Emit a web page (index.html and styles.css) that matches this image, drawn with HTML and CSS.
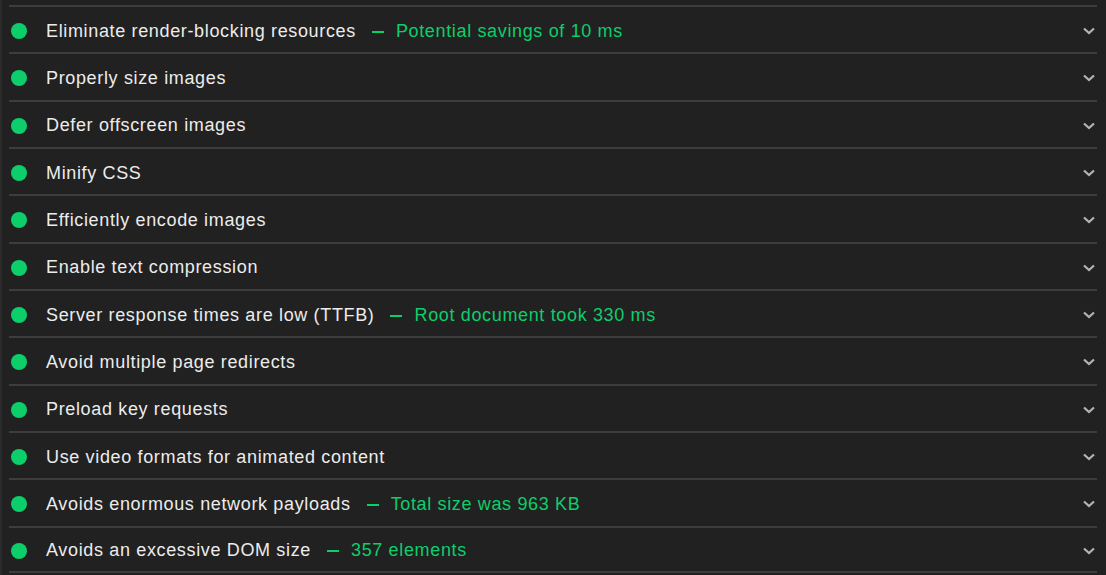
FILE: index.html
```html
<!DOCTYPE html>
<html lang="en">
<head>
<meta charset="utf-8">
<title>Passed audits</title>
<link rel="stylesheet" href="styles.css">
</head>
<body>
<div class="panel">
  <div class="audit"><span class="dot"></span><span class="title">Eliminate render-blocking resources</span><span class="sep"></span><span class="value">Potential savings of 10 ms</span><svg class="chev" viewBox="0 0 12 8"><path d="M1 1.5 L6 6 L11 1.5"/></svg></div>
  <div class="audit"><span class="dot"></span><span class="title">Properly size images</span><svg class="chev" viewBox="0 0 12 8"><path d="M1 1.5 L6 6 L11 1.5"/></svg></div>
  <div class="audit"><span class="dot"></span><span class="title">Defer offscreen images</span><svg class="chev" viewBox="0 0 12 8"><path d="M1 1.5 L6 6 L11 1.5"/></svg></div>
  <div class="audit"><span class="dot"></span><span class="title">Minify CSS</span><svg class="chev" viewBox="0 0 12 8"><path d="M1 1.5 L6 6 L11 1.5"/></svg></div>
  <div class="audit"><span class="dot"></span><span class="title">Efficiently encode images</span><svg class="chev" viewBox="0 0 12 8"><path d="M1 1.5 L6 6 L11 1.5"/></svg></div>
  <div class="audit"><span class="dot"></span><span class="title">Enable text compression</span><svg class="chev" viewBox="0 0 12 8"><path d="M1 1.5 L6 6 L11 1.5"/></svg></div>
  <div class="audit"><span class="dot"></span><span class="title">Server response times are low (TTFB)</span><span class="sep"></span><span class="value">Root document took 330 ms</span><svg class="chev" viewBox="0 0 12 8"><path d="M1 1.5 L6 6 L11 1.5"/></svg></div>
  <div class="audit"><span class="dot"></span><span class="title">Avoid multiple page redirects</span><svg class="chev" viewBox="0 0 12 8"><path d="M1 1.5 L6 6 L11 1.5"/></svg></div>
  <div class="audit"><span class="dot"></span><span class="title">Preload key requests</span><svg class="chev" viewBox="0 0 12 8"><path d="M1 1.5 L6 6 L11 1.5"/></svg></div>
  <div class="audit"><span class="dot"></span><span class="title">Use video formats for animated content</span><svg class="chev" viewBox="0 0 12 8"><path d="M1 1.5 L6 6 L11 1.5"/></svg></div>
  <div class="audit"><span class="dot"></span><span class="title">Avoids enormous network payloads</span><span class="sep"></span><span class="value">Total size was 963 KB</span><svg class="chev" viewBox="0 0 12 8"><path d="M1 1.5 L6 6 L11 1.5"/></svg></div>
  <div class="audit"><span class="dot"></span><span class="title">Avoids an excessive DOM size</span><span class="sep"></span><span class="value">357 elements</span><svg class="chev" viewBox="0 0 12 8"><path d="M1 1.5 L6 6 L11 1.5"/></svg></div>
</div>
</body>
</html>
```
FILE: styles.css
```css
html, body {
  margin: 0;
  height: 100%;
  background: #212121;
}
body {
  font-family: "Liberation Sans", Arial, sans-serif;
  overflow: hidden;
}
.panel {
  height: 575px;
  box-sizing: border-box;
  border-left: 2px solid #2b2b2b;
  padding: 5px 9px 0 7px;
}
.audit {
  display: flex;
  align-items: center;
  box-sizing: border-box;
  height: 47.33px;
  border-top: 2px solid #3d3d3d;
  padding: 3px 2px 0 2px;
  font-size: 18px;
  letter-spacing: 0.65px;
  color: #ececec;
}
.audit:last-child {
  border-bottom: 2px solid #3d3d3d;
}
.dot {
  flex: none;
  width: 16px;
  height: 16px;
  border-radius: 50%;
  background: #0cce6b;
  margin-right: 19px;
}
.sep {
  flex: none;
  width: 12px;
  height: 2px;
  background: #0cce6b;
  margin: 1px 12px 0 16px;
}
.value {
  color: #0cce6b;
}
.chev {
  margin-left: auto;
  width: 12px;
  height: 8px;
  fill: none;
  stroke: #b4b4b4;
  stroke-width: 2.2;
}
```
